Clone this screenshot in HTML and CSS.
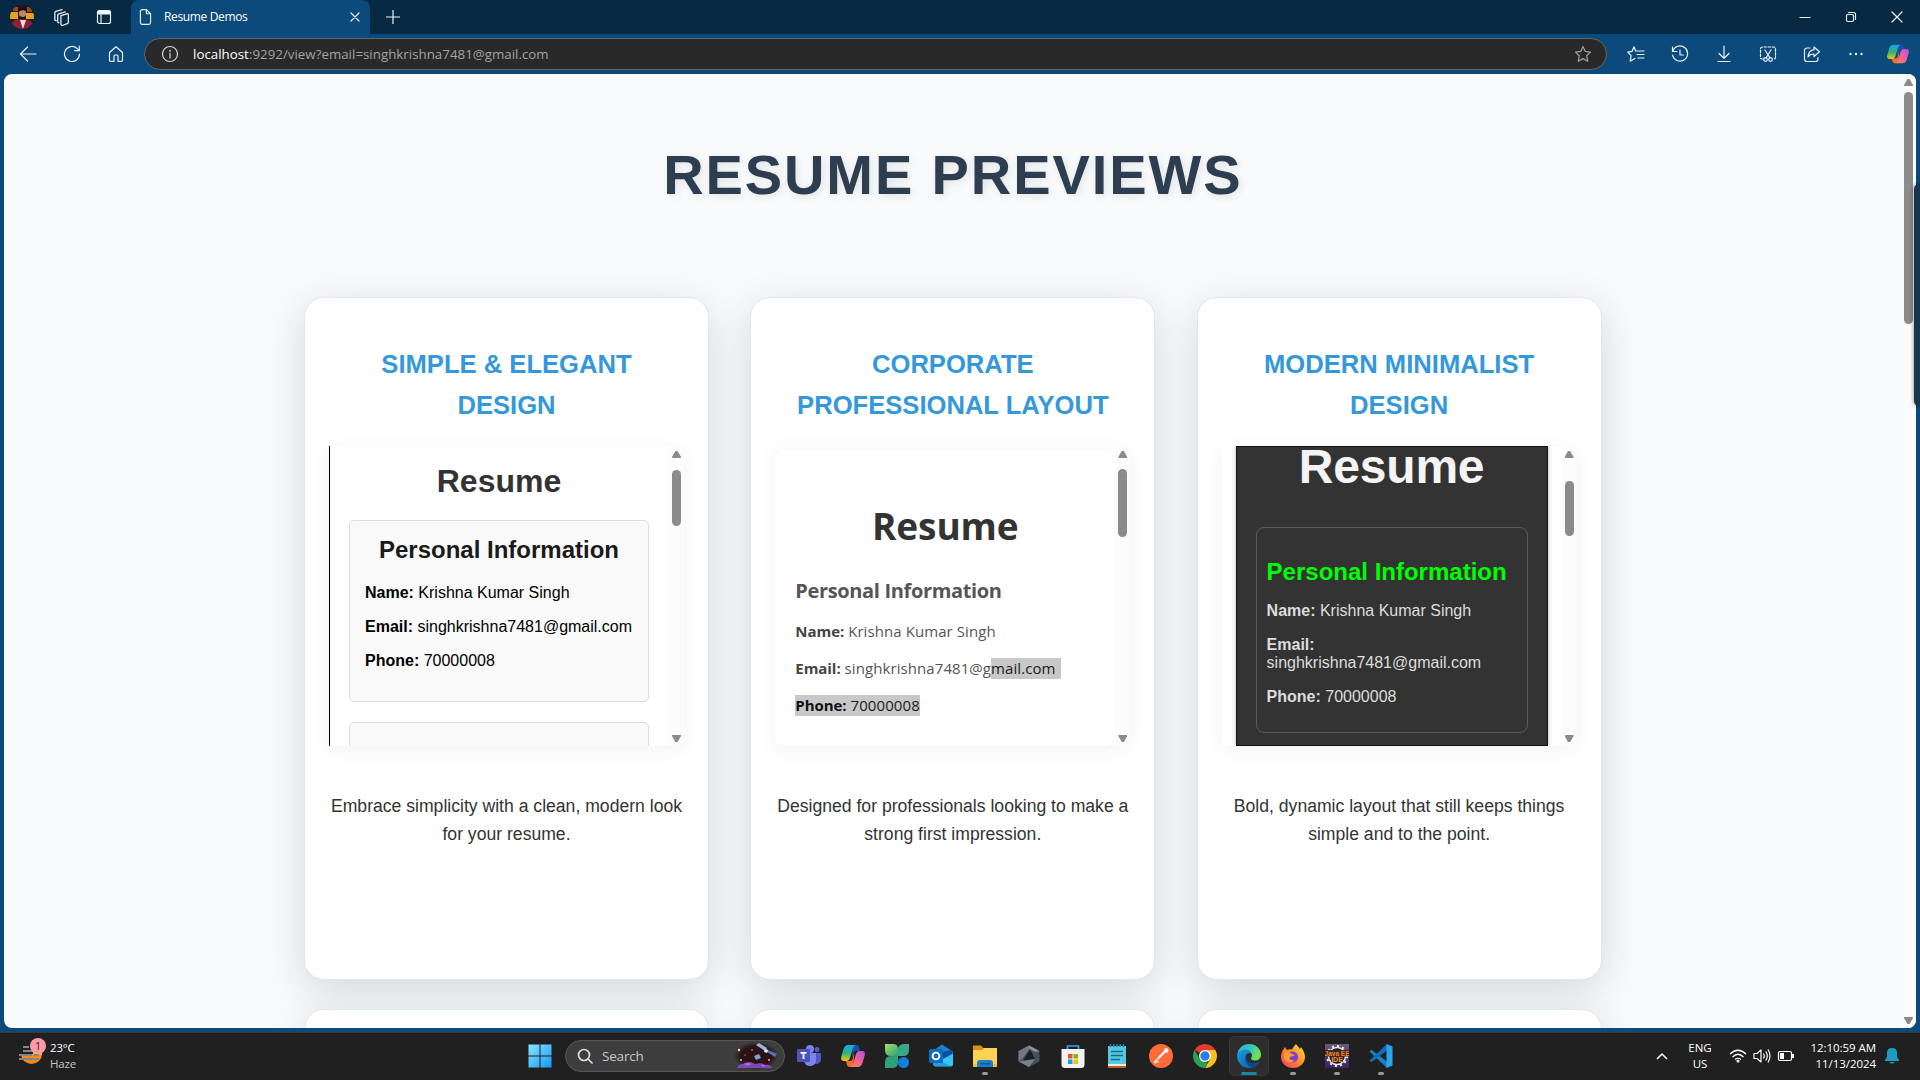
FILE: index.html
```html
<!DOCTYPE html>
<html lang="en">
<head>
<meta charset="utf-8">
<title>Resume Demos</title>
<link rel="stylesheet" href="styles.css">
</head>
<body>
<div class="screen">
  <header class="tabbar">
    <svg class="avatar" viewBox="0 0 24 24"><defs><clipPath id="av"><circle cx="12" cy="12" r="12"/></clipPath></defs><g clip-path="url(#av)"><path fill="#2a1710" d="M0 0h24v24H0z"/><path fill="#e0a420" d="M0 7h8v7H0zM16 8h8v6h-8z"/><path fill="#a3481a" d="M3 2h5v4H3zM17 2h5v5h-5z"/><path fill="#8e1f35" d="M0 24c0-7 4-10 12-10s12 3 12 10z"/><path fill="#e8dfe0" d="m10 15 3 9 3-9z"/><ellipse cx="12.500" cy="8.500" rx="3.600" ry="5" fill="#b98567"/><path fill="#17100f" d="M8.500 7c-1-6 9-7 8.500 0-2-2.500-6-2.500-8.500 0zM9.500 10.500c2 2 4.500 2 6 0 0 5-6 5-6 0z"/></g></svg>
    <svg class="ic workspaces" viewBox="0 0 16 16"><path d="M6.500 6.200 12 4.500q1.500-.3 1.500 1v7q0 1-1 1.300l-4 1.500Q6.500 15.800 6.500 14zM4.600 13 3.500 12.500V6q0-1 1-1.400l6-1.800M2 11 .8 10.500V3.500q0-1 1-1.300L7.500.6"/></svg>
    <svg class="ic tabsicon" viewBox="0 0 16 16"><rect x="1.500" y="1.500" width="13" height="13" rx="2"/><path fill="#fff" d="M2 2h12v3H2z"/><path d="M5 5v9"/></svg>
    <div class="tab">
      <svg class="ic docicon" viewBox="0 0 14 18"><path d="M1.500 3q0-2 2-2H8l4.500 4.500V15q0 2-2 2h-7q-2 0-2-2zM8 1v4.500h4.500"/></svg>
      <span class="tabname">Resume Demos</span>
      <svg class="ic tabclose" viewBox="0 0 10 10"><path d="m1 1 8 8M9 1 1 9"/></svg>
    </div>
    <svg class="ic plus" viewBox="0 0 14 14"><path d="M7 0v14M0 7h14"/></svg>
    <div class="winctl">
      <svg class="ic" viewBox="0 0 12 12"><path d="M1 6.500h10"/></svg>
      <svg class="ic" viewBox="0 0 12 12"><rect x="1.500" y="3.500" width="7" height="7" rx="1.500"/><path d="M3.500 1.500h5q2 0 2 2v5"/></svg>
      <svg class="ic" viewBox="0 0 12 12"><path d="m1 1 10 10M11 1 1 11"/></svg>
    </div>
  </header>

  <nav class="toolbar">
    <svg class="ic" viewBox="0 0 18 18"><path d="M17 9H1.500M8.500 2 1.500 9l7 7"/></svg>
    <svg class="ic" viewBox="0 0 18 18"><path d="M16.500 9a7.500 7.500 0 1 1-2.500-5.600l2 2M16.300 1v4.700h-4.600"/></svg>
    <svg class="ic" viewBox="0 0 18 18"><path d="M2.500 7.500 9 1.800l6.500 5.700V15q0 1.300-1.300 1.300H11V11q0-1-1-1H8q-1 0-1 1v5.300H3.800q-1.300 0-1.300-1.300z"/></svg>
    <div class="address">
      <svg class="ic info" viewBox="0 0 18 18"><circle cx="9" cy="9" r="7.500"/><path d="M9 8v5M9 5v1.500"/></svg>
      <span class="url"><b>localhost</b>:9292/view?email=singhkrishna7481@gmail.com</span>
      <svg class="ic star" viewBox="0 0 18 18"><path d="m9 1.500 2.300 4.900 5.200.7-3.800 3.700 1 5.400L9 13.600l-4.700 2.600 1-5.400L1.500 7.100l5.200-.7z"/></svg>
    </div>
    <div class="tools">
      <svg class="ic" viewBox="0 0 18 18"><path d="M11 6 8.600 6 7 1.800 5 6.400l-4.200.8 3.300 3.500-.9 5.500L8 13.500M11 6h6M10 9.500h7M11 13h6"/></svg>
      <svg class="ic" viewBox="0 0 18 18"><path d="M1.500 2v4.500H6M1.700 6.300A7.600 7.600 0 1 1 1.500 10M9 5v5h3.500"/></svg>
      <svg class="ic" viewBox="0 0 18 18"><path d="M9 1v12M4 8.500 9 13.300l5-4.800M3 16.500h12"/></svg>
      <svg class="ic" viewBox="0 0 18 18"><path stroke-dasharray="2.500 1.500" d="M4 14H3q-1.500 0-1.500-1.500V4Q1.500 2 3.500 2h11q2 0 2 2v8.500Q16.500 14 15 14h-1"/><path d="m6 5 5 8M12 5l-5 8"/><circle cx="6.500" cy="14.500" r="1.800"/><circle cx="11.500" cy="14.500" r="1.800"/></svg>
      <svg class="ic" viewBox="0 0 18 18"><path d="M7 3H4Q1.500 3 1.500 5.500V14q0 2.500 2.500 2.500h8.500q2.500 0 2.500-2.500v-1.500M11 2l5.500 4.800L11 11.500V9q-4-.2-6 3 .5-6.500 6-7.300z"/></svg>
      <svg class="ic dots" viewBox="0 0 18 18"><circle cx="3.500" cy="9" r="1.200"/><circle cx="9" cy="9" r="1.200"/><circle cx="14.500" cy="9" r="1.200"/></svg>
      <svg class="copilot" viewBox="0 0 24 24"><defs><linearGradient id="cpa" x1="0" y1="0" x2="0" y2="1"><stop stop-color="#17a4f0"/><stop offset=".5" stop-color="#2fb27c"/><stop offset="1" stop-color="#f5c800"/></linearGradient><linearGradient id="cpb" x1="1" y1="0" x2="0" y2="1"><stop stop-color="#a653e8"/><stop offset=".5" stop-color="#f0609a"/><stop offset="1" stop-color="#fb8a3a"/></linearGradient></defs><path fill="#174fae" d="M12 2h3.500q2 0 2.500 2l1 3h-4q-2 0-2.500 2l-2 7z"/><path fill="#fb6a35" d="M12 22H8.500Q6.500 22 6 20l-1-3h4q2 0 2.500-2l2-7z"/><path fill="url(#cpa)" d="M7 2h8q-2 0-3 3l-3 10q-1 2.500-3 2.500H3q-4 0-2.500-5l2-7Q4 2 7 2z"/><path fill="url(#cpb)" d="M17 22H9q2 0 3-3l3-10q1-2.500 3-2.500h3q4 0 2.500 5l-2 7Q20 22 17 22z"/></svg>
    </div>
  </nav>

  <div class="frame">
    <main class="page">
      <div class="content">
        <h1 class="title">RESUME PREVIEWS</h1>
        <div class="grid">
          <article class="card">
            <h2 class="cardtitle">SIMPLE &amp; ELEGANT DESIGN</h2>
            <div class="preview">
              <div class="doc simple">
                <h3>Resume</h3>
                <section>
                  <h4>Personal Information</h4>
                  <p><b>Name:</b> Krishna Kumar Singh</p>
                  <p><b>Email:</b> singhkrishna7481@gmail.com</p>
                  <p><b>Phone:</b> 70000008</p>
                </section>
                <section></section>
              </div>
              <div class="bar"><i class="up"></i><i class="thumb t1"></i><i class="down"></i></div>
            </div>
            <p class="desc">Embrace simplicity with a clean, modern look for your resume.</p>
          </article>
          <article class="card">
            <h2 class="cardtitle">CORPORATE PROFESSIONAL LAYOUT</h2>
            <div class="preview">
              <div class="doc corporate">
                <h3>Resume</h3>
                <h4>Personal Information</h4>
                <p><b>Name:</b> Krishna Kumar Singh</p>
                <p><b>Email:</b> singhkrishna7481@g<span class="sel end">mail.com</span></p>
                <p><span class="sel"><b>Phone:</b> 70000008</span></p>
              </div>
              <div class="bar"><i class="up"></i><i class="thumb t2"></i><i class="down"></i></div>
            </div>
            <p class="desc">Designed for professionals looking to make a strong first impression.</p>
          </article>
          <article class="card">
            <h2 class="cardtitle">MODERN MINIMALIST DESIGN</h2>
            <div class="preview">
              <div class="doc modern">
                <div class="dark">
                  <h3>Resume</h3>
                  <section>
                    <h4>Personal Information</h4>
                    <p><b>Name:</b> Krishna Kumar Singh</p>
                    <p><b>Email:</b> singhkrishna7481@gmail.com</p>
                    <p><b>Phone:</b> 70000008</p>
                  </section>
                </div>
              </div>
              <div class="bar"><i class="up"></i><i class="thumb t3"></i><i class="down"></i></div>
            </div>
            <p class="desc">Bold, dynamic layout that still keeps things simple and to the point.</p>
          </article>
          <article class="card"></article>
          <article class="card"></article>
          <article class="card"></article>
        </div>
      </div>
      <div class="bar mainbar"><i class="up"></i><i class="thumb tm"></i><i class="down"></i></div>
    </main>
    <div class="sidehandle"></div>
  </div>

  <footer class="taskbar">
    <div class="weather">
      <div class="wicon">
        <svg viewBox="0 0 24 24" width="24" height="24"><path fill="#f28a1c" d="M2 12h21a10.500 10 0 0 1-21 0z"/><path fill="#f7b32b" d="M14 8h9v5h-9z"/><path stroke="#858585" stroke-width="2" d="M4 5h6M4 9h10M0 13h13M15 13h5M0 17h20"/></svg>
        <span class="badge">1</span>
      </div>
      <div class="wtext"><span>23°C</span><span class="dim">Haze</span></div>
    </div>

    <div class="apps">
      <div class="app start"><svg viewBox="0 0 24 24"><defs><linearGradient id="wn" x1="0" y1="0" x2="1" y2="1"><stop stop-color="#8be4ff"/><stop offset="1" stop-color="#1398f5"/></linearGradient></defs><path fill="url(#wn)" d="M.5.500h11v11H.5zM12.500.500h11v11h-11zM.5 12.500h11v11H.5zM12.500 12.500h11v11h-11z"/></svg></div>
      <div class="search">
        <svg class="lens" viewBox="0 0 16 16"><circle cx="7" cy="7" r="5.500"/><path d="m11 11 4 4"/></svg>
        <span>Search</span>
        <svg class="art" viewBox="0 0 44 28"><defs><radialGradient id="sky"><stop stop-color="#2e0f14"/><stop offset=".7" stop-color="#2a1218"/><stop offset="1" stop-color="#2a1218" stop-opacity="0"/></radialGradient></defs><ellipse cx="22" cy="14" rx="22" ry="14" fill="url(#sky)"/><path fill="#7d4ab3" d="M3 26q1-4 6-4 6-4 12 0 7-2 10 1 5-1 7 3z"/><path fill="#a06cd0" d="M9 22q5-2 9 0l-4 2zM26 23h6l-2 2z"/><path fill="#9db8dc" d="m22 3 3-2 8 5-2 3z"/><path fill="#5677ae" d="m32 7 11 5-2 3-10-6z"/><path fill="#dbe5f2" d="m31 7 3 1-1 3-3-1z"/><path fill="#7ea2d8" d="m20 14 5-2 2 4-5 2z"/><g fill="#f0d9b0"><circle cx="5" cy="8" r="1.200"/><circle cx="7" cy="18" r=".9"/><circle cx="18" cy="8" r=".7"/><circle cx="35" cy="18" r=".9"/><circle cx="11" cy="13" r=".6"/></g></svg>
      </div>
      <div class="app"><svg viewBox="0 0 24 24"><circle cx="13" cy="5" r="4" fill="#7b83eb"/><circle cx="20" cy="5.500" r="2.500" fill="#5059c9"/><path fill="#5059c9" d="M15 9h9v7q-1 4-5 4h-4z"/><path fill="#7b83eb" d="M7 9h12v8q-1 5-6 5t-6-5z"/><rect y="5" width="13" height="13" rx="1" fill="#4b53bc"/><path fill="#fff" d="M3.500 8h6v1.700H7.400V15H5.600V9.700H3.500z"/></svg></div>
      <div class="app"><svg viewBox="0 0 24 24"><path fill="#174fae" d="M12 1h3.500q2 0 2.500 2l1 4h-4q-2 0-2.500 2l-2 7z"/><path fill="#fb6a35" d="M12 23H8.500q-2 0-2.500-2l-1-4h4q2 0 2.500-2l2-7z"/><path fill="url(#cpa)" d="M7 1h8q-2 0-3 3L9 14q-1 3-3 3H3q-4 0-2.500-5l2-7Q4 1 7 1z"/><path fill="url(#cpb)" d="M17 23H9q2 0 3-3l3-10q1-3 3-3h3q4 0 2.500 5l-2 7Q20 23 17 23z"/></svg></div>
      <div class="app"><svg viewBox="0 0 24 24"><defs><linearGradient id="lf" x1="0" y1="0" x2="1" y2="1"><stop stop-color="#a8e05f"/><stop offset="1" stop-color="#26a17b"/></linearGradient></defs><path fill="url(#lf)" d="M0 0h8q5 0 5 5v7H6q-6 0-6-6z"/><path fill="#38a886" d="M24 0v6q0 6-6 6h-5V6q0-6 6-6z"/><path fill="#2f9f78" d="M0 24v-6q0-6 6-6h7v6q0 6-6 6z"/><circle cx="18.500" cy="18.500" r="5.500" fill="#1180dd"/></svg></div>
      <div class="app"><svg viewBox="0 0 24 24"><path fill="#1683d8" d="m4 7 9-6.500 11 7V11L10 20z"/><path fill="#0a4fa0" d="m13 8 9-2 2 3-10 6z"/><path fill="#36c4f3" d="M24 10v10q0 2.500-2.500 2.500H7q-2.500 0-3-2.500z"/><path fill="#1f9de8" d="m4 13 17 9H7q-3 0-3-3z"/><rect y="5" width="14" height="14" rx="1.500" fill="#0f6cbd"/><circle cx="7" cy="12" r="3.400" fill="none" stroke="#fff" stroke-width="1.900"/></svg></div>
      <div class="app run"><svg viewBox="0 0 24 24"><path fill="#d99310" d="M0 1.500h8l2 2.500h12v6H0z"/><path fill="#ffd257" d="M0 6h9l2-2h13v19H0z"/><path fill="#f6b92f" d="M0 20h24v3H0z"/><path fill="#1b7fd0" d="M4 23v-4q0-3 3-3h10q3 0 3 3v4z"/><path fill="#12569b" d="M7 19h10v1.500H7z"/></svg></div>
      <div class="app"><svg viewBox="0 0 24 24"><path fill="#48515a" d="m12 1.500 10.500 5.500v10.500L12 23 1.500 17.500V7z"/><path fill="#8b959e" d="m12 1.500 10.500 5.500-4 1L12 4.500z"/><path fill="#707a84" d="M1.500 7 12 1.500v4L5 15l-3.500 2z"/><path fill="#1b2127" d="M13 5.500 18 15 6 16.500z"/><path fill="#aab3bb" d="M1.500 17.500 18 15l-6 8z" opacity=".5"/></svg></div>
      <div class="app"><svg viewBox="0 0 24 24"><path fill="none" stroke="#29a8ea" stroke-width="1.700" d="M6.500 6V2h11v4"/><path fill="#f2f2f2" d="M.5 5h23v15.500q0 3.500-3.500 3.500H4Q.5 24 .5 20.500z"/><path fill="#f25022" d="M7 10h4.500v4.500H7z"/><path fill="#7fba00" d="M12.500 10H17v4.500h-4.500z"/><path fill="#00a4ef" d="M7 15.500h4.500V20H7z"/><path fill="#ffb900" d="M12.500 15.500H17V20h-4.500z"/></svg></div>
      <div class="app"><svg viewBox="0 0 24 24"><path fill="#55c7de" d="M3 2h18v19H3z"/><path fill="#e9edf0" d="M3 20h18v2H3z"/><path fill="#b8651b" d="M3 22h18v2H3z"/><path stroke="#176e8c" stroke-width="1.600" d="M6 7.500h12M6 11.500h12M6 15.500h9"/><path stroke="#1f7f9c" stroke-width="1.500" d="M5.500 0v3M8.700 0v3M12 0v3M15.300 0v3M18.500 0v3"/></svg></div>
      <div class="app"><svg viewBox="0 0 24 24"><circle cx="12" cy="12" r="12" fill="#ff6c37"/><path stroke="#fff" stroke-width="2.200" stroke-linecap="round" d="m9.500 14 7-7"/><circle cx="17.200" cy="6.500" r="2.300" fill="#fff"/><path stroke="#fff" stroke-width="1.200" d="m5 18.500 8-8M6 19l4-2"/></svg></div>
      <div class="app"><svg viewBox="0 0 24 24"><path fill="#e33b2e" d="M12 12 1.610 6A12 12 0 0 1 22.390 6z"/><path fill="#fbc116" d="M12 6h10.390A12 12 0 0 1 12 24l5.200-9z"/><path fill="#2ba24c" d="m1.610 6 5.200 9 5 3.500 3-.3L12 24A12 12 0 0 1 1.610 6z"/><circle cx="12" cy="12" r="6" fill="#fff"/><circle cx="12" cy="12" r="4.700" fill="#2b7de9"/></svg></div>
      <div class="app active"><svg viewBox="0 0 24 24"><defs><linearGradient id="eg" x1="0" y1="0" x2="1" y2=".3"><stop stop-color="#2bb3e6"/><stop offset=".6" stop-color="#35c9b5"/><stop offset="1" stop-color="#74e04f"/></linearGradient><linearGradient id="eh" x1="0" y1="0" x2="1" y2="1"><stop stop-color="#1b9be0"/><stop offset="1" stop-color="#0c59a4"/></linearGradient></defs><path fill="url(#eg)" d="M.3 10C1.500 4 6 0 12 0c7 0 12 5 12 10.500 0 4-3 6-6 6-2.500 0-4-1-4-2s1-1.500 1-3C15 9 12.500 7 9 7S2 8 .3 10z"/><path fill="url(#eh)" d="M.1 11C.5 8 4 5.500 8.500 5.500c3 0 5.500 1.500 6.200 4C11 8 8 11 8.500 14.500c.5 4 5 6.500 13.500 4C19.500 22.500 16 24 12 24 5 24-.5 18.500.1 11z"/><path fill="#0b4793" d="M9 10.500c-2 5 0 12 7 12.900 3-.9 5-2.400 6.200-4.700C15 21.500 9 18 9 10.500z"/></svg></div>
      <div class="app run"><svg viewBox="0 0 24 24"><defs><linearGradient id="ff" x1="1" y1="0" x2="0" y2="1"><stop stop-color="#ffe53b"/><stop offset=".5" stop-color="#ff8a26"/><stop offset="1" stop-color="#f5336a"/></linearGradient></defs><path fill="url(#ff)" d="M15 0c1 2 3 3 4 5l1-2c2 3 4 6 4 10 0 6-5 11-12 11S0 19 0 13c0-3 1-6 2-7l2-3 2 3c2-1 3-1 5-.5C12 4 13 2 15 0z"/><circle cx="11.500" cy="13" r="5.500" fill="#7a3fd6"/><path fill="#ff9a2b" d="M3 9c3-2 6-1 8 1l3 1c-2 2-4 1-5 2-2 2 2 4 5 3-3 4-10 3-11-2z"/></svg></div>
      <div class="app run"><svg viewBox="0 0 24 24"><defs><linearGradient id="je" x1="0" y1="0" x2="0" y2="1"><stop stop-color="#6d5877"/><stop offset="1" stop-color="#3c2166"/></linearGradient></defs><path fill="url(#je)" d="M0 0h24v24H0z"/><circle cx="12" cy="12" r="8.500" fill="#1f1a20" stroke="#e8e8ea" stroke-width="1.500"/><circle cx="12" cy="12" r="10" fill="none" stroke="#e8e8ea" stroke-width="2" stroke-dasharray="2.200 3"/><path fill="#3a2528" d="M0 6h24v6.500H0zM6 12h12v6H6z"/><text class="jee" x="12" y="11.500">Java EE</text><text class="jee ide" x="12" y="17.800">IDE</text></svg></div>
      <div class="app run"><svg viewBox="0 0 24 24"><path fill="#1580c8" d="m.5 7.500 2-1.700L18 17.500V24z"/><path fill="#0f6eb5" d="m.5 16.500 2 1.700L18 6.500V0z"/><path fill="#2aa5ee" d="m17.500 0 6 2.500v19l-6 2.500z"/></svg></div>
    </div>

    <div class="tray">
      <svg class="ti chev" viewBox="0 0 12 8"><path d="m1 7 5-5 5 5"/></svg>
      <div class="lang"><span>ENG</span><span>US</span></div>
      <svg class="ti net" viewBox="0 0 18 16"><path d="M1 6Q9-1.500 17 6M3.500 9Q9 3.500 14.500 9M6 11.500q3-2.500 6 0"/><circle cx="9" cy="13" r="1"/></svg>
      <svg class="ti vol" viewBox="0 0 18 16"><path d="M1 5.500h3L8 2v12L4 10.500H1zM10.500 5.500q1.500 2.500 0 5M12.800 3.500q3 4.500 0 9M15 1.500q4 6.500 0 13"/></svg>
      <svg class="ti bat" viewBox="0 0 18 16"><rect x="1.500" y="3.500" width="13" height="9" rx="1.500"/><path fill="#fff" stroke="none" d="M3 5h4v6H3zM15 6h2v4h-2z"/></svg>
      <div class="clock"><span>12:10:59 AM</span><span>11/13/2024</span></div>
      <svg class="bell" viewBox="0 0 14 16"><path fill="#1b9cc0" d="M7 0q5 0 5 5v4l2 3v1H0v-1l2-3V5q0-5 5-5zM4.500 14h5Q9 15.500 7 15.500T4.500 14z"/></svg>
    </div>
  </footer>
</div>
</body>
</html>
```

FILE: styles.css
```css
* { box-sizing: border-box; }
body, h1, h2, h3, h4, p { margin: 0; }
body { overflow: hidden; background: #0b4a7a; font-family: "Open Sans", "Noto Sans", sans-serif; }
svg { display: block; flex: none; }
.screen { display: flex; flex-direction: column; width: 1920px; height: 1080px; overflow: hidden; }

.ic { width: 18px; height: 18px; fill: none; stroke: #e9f1f8; stroke-width: 1.2; stroke-linecap: round; stroke-linejoin: round; }

/* tab strip */
.tabbar { display: flex; align-items: center; height: 34px; background: #072944; padding-left: 10px; flex: none; }
.avatar { width: 24px; height: 24px; }
.workspaces { width: 17px; height: 17px; margin-left: 20px; }
.tabsicon { width: 16px; height: 16px; margin-left: 25px; }
.tab { display: flex; align-items: center; width: 239px; height: 34px; margin-left: 19px; padding: 0 10px 0 8px; background: #0b4a7a; border-radius: 8px 8px 0 0; color: #fff; }
.docicon { width: 13px; height: 18px; }
.tabname { margin-left: 12px; font-size: 12px; letter-spacing: -0.4px; line-height: 16px; padding-bottom: 1px; flex: 1; }
.tabname { letter-spacing: -0.35px; }
.tabclose { width: 10px; height: 10px; }
.plus { width: 14px; height: 14px; margin-left: 16px; }
.winctl { display: flex; gap: 34px; margin-left: auto; margin-right: 17px; }
.winctl .ic { width: 12px; height: 12px; }

/* navigation row */
.toolbar { display: flex; align-items: center; gap: 26px; height: 40px; padding-left: 19px; flex: none; }
.address { display: flex; align-items: center; width: 1463px; height: 32px; margin-left: -7px; padding: 0 14px 0 16px; border: 1px solid #66655f; border-radius: 16px; background: #292929; }
.address .ic { stroke: #d5d5d5; }
.address .star { stroke: #a0a0a0; }
.url { flex: 1; margin-left: 14px; font-size: 13.3px; color: #a3a3a3; letter-spacing: 0.02px; }
.url b { font-weight: 400; color: #fff; }
.tools { display: flex; align-items: center; gap: 26px; margin-left: -6px; }
.dots { fill: #e9f1f8; stroke: none; }
.copilot { width: 22px; height: 22px; margin-left: -4px; }

/* web page */
.frame { position: relative; height: 958px; padding: 0 4px 4px; overflow: hidden; flex: none; }
.page { display: flex; height: 954px; overflow: hidden; border-radius: 8px; background: #f9fafc; }
.content { width: 1897px; padding: 69px 0 0 300px; font-family: "Liberation Sans", Arial, sans-serif; }
.title { width: 1297.600px; margin-bottom: 90px; text-align: center; font-size: 56px; line-height: 64px; letter-spacing: 1.900px; color: #2c3e50; text-shadow: 2px 2px 8px rgba(0,0,0,.1); }
.grid { display: grid; grid-template-columns: repeat(3, 405px); column-gap: 41.300px; row-gap: 29px; }
.card { height: 683px; padding: 46px 24px 0; border: 1px solid #e0e6ed; border-radius: 20px; background: #fff; box-shadow: 0 10px 40px rgba(0,0,0,.14); text-align: center; }
.cardtitle { font-size: 25.600px; line-height: 41px; color: #3498db; padding: 0 15px; }
.preview { display: flex; width: 355px; height: 300px; margin-top: 20px; overflow: hidden; border-radius: 0 12px 12px 0; box-shadow: 0 4px 20px rgba(0,0,0,.05); text-align: left; }
.desc { margin-top: 46px; font-size: 17.600px; line-height: 28.160px; color: #333; }

.doc { width: 340px; height: 300px; overflow: hidden; flex: none; }
.doc p { font-size: 16px; line-height: 18px; }
.doc p + p { margin-top: 16px; }

.simple { padding: 17px 20px 0 19px; border-left: 1px solid #000; color: #000; }
.simple h3 { text-align: center; font-size: 32px; line-height: 36px; color: #333; margin-bottom: 21px; }
.simple section { width: 300px; height: 182px; padding: 15px 15px 0; border: 1px solid #ddd; border-radius: 5px; background: #f9f9f9; }
.simple section + section { margin-top: 20px; }
.simple h4 { text-align: center; font-size: 24px; line-height: 28px; color: #1a1a1a; margin-bottom: 20px; }

.corporate { height: 296px; margin-top: 4px; padding: 51px 20px 0; border-radius: 10px; background: #fff; color: #555; font-family: "Open Sans", "Noto Sans", sans-serif; box-shadow: 0 0 10px rgba(0,0,0,.05); }
.corporate h3 { text-align: center; font-size: 37px; line-height: 50px; letter-spacing: -0.100px; color: #333; }
.corporate h4 { margin: 26px 0 16px; font-size: 20px; line-height: 28px; letter-spacing: -0.350px; color: #555; }
.corporate p { font-size: 15px; line-height: 21px; letter-spacing: 0.080px; white-space: nowrap; }
.corporate b { color: #444; letter-spacing: -0.050px; }
.sel { display: inline-block; background: #c8c8c8; color: #1b1b1b; }
.sel b { color: #111; }
.end { padding-right: 5px; }

.modern { padding: 0 20px 0 14px; }
.dark { width: 312px; height: 300px; padding: 0 19px; border: 1px solid #111; background: #333; color: #ddd; overflow: hidden; box-shadow: 0 0 5px rgba(0,0,0,.25); }
.dark h3 { margin: -7px 0 33px; text-align: center; font-size: 48px; line-height: 54px; letter-spacing: -0.200px; color: #f4f4f4; }
.dark section { width: 272px; height: 206px; padding: 30px 10px 0; border: 1px solid #5a5a5a; border-radius: 8px; }
.dark h4 { margin-bottom: 16px; font-size: 24px; line-height: 28px; color: #0f0; }

/* scrollbars */
.bar { display: flex; flex-direction: column; align-items: center; width: 15px; padding: 5px 0 4px; background: #fcfcfc; flex: none; }
.bar i { display: block; width: 9px; background: #8b8b8b; }
.up, .down { height: 7px; }
.up { clip-path: polygon(38% 0, 62% 0, 100% 85%, 100% 100%, 0 100%, 0 85%); }
.down { margin-top: auto; clip-path: polygon(0 0, 100% 0, 100% 15%, 62% 100%, 38% 100%, 0 15%); }
.thumb { border-radius: 5px; }
.t1 { height: 56px; margin-top: 12px; }
.t2 { height: 68px; margin-top: 11px; }
.t3 { height: 55px; margin-top: 23px; }
.tm { height: 232px; margin-top: 6px; }
.sidehandle { position: absolute; right: -1px; top: 110px; width: 7px; height: 222px; border-radius: 5px 0 0 5px; background: #17364f; box-shadow: 0 0 4px rgba(0,0,0,.5); }

/* taskbar */
.taskbar { display: grid; grid-template-columns: 518px 1fr 280px; height: 48px; background: #202020; border-top: 1px solid #3b3b3b; color: #fff; font-size: 11.500px; flex: none; }
.weather { display: flex; padding: 5px 0 0 19px; }
.wicon { position: relative; width: 24px; margin-top: 4px; }
.badge { position: absolute; left: 11px; top: -4px; width: 16px; height: 16px; border-radius: 8px; background: #ff99a4; color: #222; font-size: 10.500px; line-height: 16px; text-align: center; }
.wtext { display: flex; flex-direction: column; margin-left: 7px; line-height: 16px; letter-spacing: -0.2px; padding-top: 2px; }
.dim { color: #c4c4c4; }
.apps { display: flex; align-items: center; padding-bottom: 1px; }
.app { position: relative; display: flex; align-items: center; justify-content: center; width: 44px; height: 40px; flex: none; }
.app svg { width: 24px; height: 24px; }
.app.active { width: 40px; margin: 0 2px; border: 1px solid #353535; border-radius: 5px; background: #2d2d2d; }
.run::after, .active::after { content: ""; position: absolute; left: calc(50% - 3px); bottom: 1px; width: 6px; height: 3px; border-radius: 2px; background: #999; }
.active::after { left: calc(50% - 8px); bottom: 0; width: 16px; background: #1b86a1; }
.start { margin-right: 3px; }
.search { display: flex; align-items: center; width: 220px; height: 32px; margin-right: 2px; padding: 0 6px 0 11px; border: 1px solid #555; border-radius: 16px; background: #3d3d3d; color: #c8c8c8; font-size: 13.500px; letter-spacing: -0.200px; }
.lens { width: 16px; height: 16px; margin-right: 9px; fill: none; stroke: #ddd; stroke-width: 1.700; stroke-linecap: round; }
.art { width: 44px; height: 28px; margin-left: auto; }
.jee { fill: #f58a1f; font: bold 6.500px "Liberation Sans", sans-serif; text-anchor: middle; }
.ide { font-size: 7px; }
.tray { display: flex; align-items: center; padding: 0 0 1px 16px; line-height: 16px; }
.ti { fill: none; stroke: #fff; stroke-width: 1.200; stroke-linejoin: round; }
.chev { width: 12px; height: 8px; stroke-width: 1.500; }
.lang { display: flex; flex-direction: column; align-items: center; width: 26px; margin-left: 19px; }
.net { width: 18px; height: 16px; margin-left: 16px; }
.vol { width: 18px; height: 16px; margin-left: 6px; }
.bat { width: 18px; height: 16px; margin-left: 6px; }
.clock { display: flex; flex-direction: column; align-items: flex-end; width: 70px; margin-left: 11px; letter-spacing: -0.050px; white-space: nowrap; }
.bell { width: 14px; height: 16px; margin-left: 9px; }
```
